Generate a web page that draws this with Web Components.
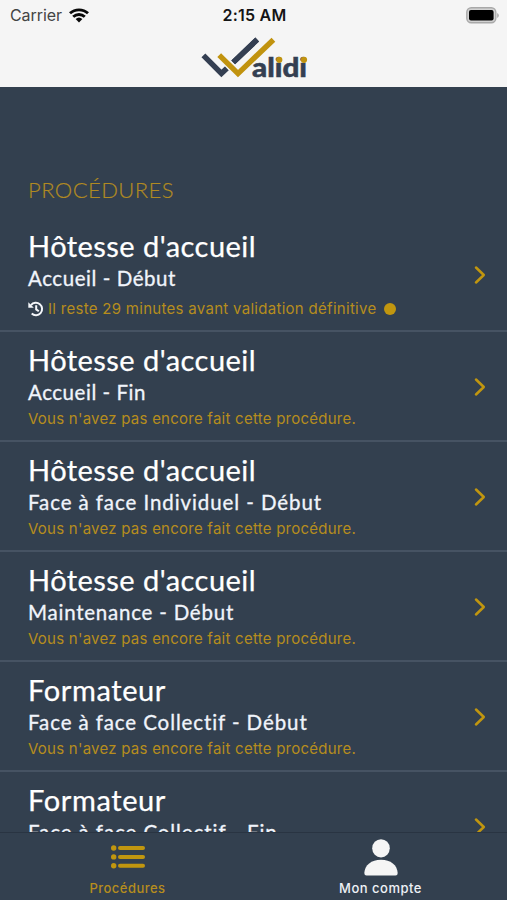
<!DOCTYPE html>
<html lang="fr">
<head>
<meta charset="utf-8">
<title>Validi</title>
<style>
html,body{margin:0;height:100%;overflow:hidden}
body{background:#33404f}
</style>
</head>
<body>
<validi-app></validi-app>
<script>
const define = (name, html, setup) => customElements.define(name, class extends HTMLElement {
  connectedCallback() {
    if (this.shadowRoot) return;
    const t = document.createElement('template');
    t.innerHTML = html;
    this.attachShadow({mode: 'open'}).append(t.content.cloneNode(true));
    if (setup) setup(this, this.shadowRoot);
  }
});

/* Text whose tracking is spread so that the line takes the given width. */
define('tracked-text', `<style>:host{display:block;white-space:nowrap}span{display:inline-block}</style><span></span>`, (el, root) => {
  const span = root.querySelector('span');
  span.textContent = el.getAttribute('text');
  const gap = (Number(el.getAttribute('width')) - span.getBoundingClientRect().width) / span.textContent.length;
  span.style.letterSpacing = gap.toFixed(3) + 'px';
});

define('status-bar', `<style>
:host{display:grid;grid-template-columns:1fr auto 1fr;align-items:center;height:30px;padding:0 8px 0 10px;font:16px/30px Inter,"Liberation Sans",sans-serif;color:#444}
.left{display:flex;align-items:center;gap:7px}
.time{color:#151515;font-weight:600}
.right{justify-self:end;display:flex}
svg{display:block}
</style>
<div class="left"><tracked-text text="Carrier" width="52"></tracked-text>
<svg width="20" height="15" viewBox="0 0 20 15" fill="none" stroke="#080808" stroke-width="2.9"><path d="M1 5.3C6 .7 14 .7 19 5.3M4.2 8.8C7.6 5.7 12.4 5.7 15.8 8.8"/><path d="M6.6 10.9Q10 7.9 13.4 10.9L10 14.6Z" fill="#080808" stroke="none"/></svg></div>
<tracked-text class="time" text="2:15 AM" width="64"></tracked-text>
<div class="right"><svg width="33" height="17" viewBox="0 0 33 17"><rect x=".8" y=".8" width="29" height="15" rx="4.5" fill="#d2d2d2" stroke="#a9a9a9" stroke-width="1.4"/><rect x="3" y="3" width="24.6" height="10.6" rx="2" fill="#000"/><path d="M31.2 6v5q1.6-.6 1.6-2.5T31.2 6" fill="#aaa"/></svg></div>`);

define('validi-logo', `<style>:host{display:block;width:110px;height:46px}svg{display:block;overflow:visible}</style>
<svg width="110" height="46" viewBox="0 0 110 46">
<g fill="none" stroke-width="5.4">
<path d="M3.4 20.3L21.4 38.5L28 32.2M33.2 27.4L57.2 4.5" stroke="#343f52"/>
<path d="M19.2 20.1L38 39.5L73.4 4.9" stroke="#f5f5f5" stroke-width="7.5"/>
<path d="M33.2 27.4L57.2 4.5" stroke="#343f52"/>
<path d="M19.2 20.1L38 38.6L73.4 4.7" stroke="#c1930f"/>
</g>
<text x="52" y="42.300" textLength="55" lengthAdjust="spacingAndGlyphs" font-family="Lato,sans-serif" font-weight="900" font-size="26.5" fill="#343f52" stroke="#343f52" stroke-width=".5">alidi</text>
<g fill="#c1930f"><circle cx="79.300" cy="24.800" r="3.1"/><circle cx="104" cy="24.800" r="3.1"/></g>
</svg>`);

define('app-header', `<style>
:host{display:flex;flex-direction:column;height:87px;background:#f5f5f5;flex:none}
validi-logo{margin:5px 0 0 200px}
</style><status-bar></status-bar><validi-logo></validi-logo>`);

define('procedure-row', `<style>
:host{display:flex;align-items:center;justify-content:space-between;box-sizing:border-box;height:110px;flex:none;padding:0 20px 0 28px;border-bottom:2px solid #465363}
:host([pending]){height:114px}
.body{display:flex;flex-direction:column;align-self:flex-start;padding-top:10px}
.title{font:29px/36px Lato,sans-serif;color:#fff;-webkit-text-stroke:.25px #fff}
.sub{font:20.5px/28px Lato,sans-serif;color:#f0f4fb;-webkit-text-stroke:.3px #f0f4fb}
.status{display:flex;align-items:center;height:26px;font:15px/24px Inter,sans-serif;color:#b68d1d}
:host([pending]) .status{height:33px}
.history,.dot{display:none;flex:none}
:host([pending]) .history{display:block;margin-right:4px}
:host([pending]) .dot{display:block;width:12px;height:12px;border-radius:50%;background:#c1960f;margin-left:7.5px}
.chev{flex:none;margin-top:1px}
</style>
<div class="body"><tracked-text class="title"></tracked-text><tracked-text class="sub"></tracked-text>
<div class="status"><svg class="history" width="16" height="16" viewBox="0 0 16 16" fill="none" stroke="#f4f6fa" stroke-width="2"><path d="M3 4.2A6.2 6.2 0 1 1 3.7 12.6M8.2 4.2v4.2l2.6 1.9"/><path d="M.3 1.2v5.5h5.5Z" fill="#f4f6fa" stroke="none"/></svg><tracked-text class="note"></tracked-text><span class="dot"></span></div></div>
<svg class="chev" width="14" height="20" viewBox="0 0 14 20" fill="none" stroke="#c1960f" stroke-width="2.5" stroke-linecap="round" stroke-linejoin="round"><path d="M3 2.5L10.8 10L3 17.5"/></svg>`, (el, root) => {
  for (const part of ['title', 'sub', 'note']) {
    const [text, width] = el.getAttribute('data-' + part).split('|');
    const t = root.querySelector('.' + part);
    const copy = document.createElement('tracked-text');
    copy.className = t.className;
    copy.setAttribute('text', text);
    copy.setAttribute('width', width);
    t.replaceWith(copy);
  }
});

define('tab-item', `<style>
:host{display:flex;flex-direction:column;align-items:center;flex:1;font:500 13px/15px Inter,sans-serif}
.icon{height:48px;display:flex;align-items:center}
::slotted(svg){display:block}
</style><div class="icon"><slot></slot></div><tracked-text></tracked-text>`, (el, root) => {
  const t = document.createElement('tracked-text');
  t.setAttribute('text', el.getAttribute('label'));
  t.setAttribute('width', el.getAttribute('size'));
  root.querySelector('tracked-text').replaceWith(t);
});

define('tab-bar', `<style>
:host{display:flex;box-sizing:border-box;height:68px;flex:none;background:#33404f;border-top:1px solid #293442}
.on{color:#b68d1d;padding-left:1px}.off{color:#eef1f6}
</style>
<tab-item class="on" label="Procédures" size="76"><svg width="34" height="24" viewBox="0 0 34 24" fill="#c1960f"><circle cx="2.7" cy="3" r="2.7"/><circle cx="2.7" cy="11.9" r="2.7"/><circle cx="2.7" cy="20.7" r="2.7"/><rect x="7" y="1" width="27" height="4" rx="2"/><rect x="7" y="9.9" width="27" height="4" rx="2"/><rect x="7" y="18.7" width="27" height="4" rx="2"/></svg></tab-item>
<tab-item class="off" label="Mon compte" size="83"><svg width="34" height="37" viewBox="0 0 34 37" fill="#f5f5f5"><ellipse cx="17" cy="9.3" rx="8.8" ry="9.1"/><path d="M2.5 36.5Q.3 36.5.3 34C.8 26 7.3 20.7 17 20.7S33.200 26 33.700 34Q33.700 36.500 31.500 36.500Z"/></svg></tab-item>`);

const N = "Vous n'avez pas encore fait cette procédure.|328";
const H = "Hôtesse d'accueil|228";
const rows = [
  [H, 'Accueil - Début|148', 'Il reste 29 minutes avant validation définitive|328.5', true],
  [H, 'Accueil - Fin|118', N],
  [H, 'Face à face Individuel - Début|294', N],
  [H, 'Maintenance - Début|206', N],
  ['Formateur|138', 'Face à face Collectif - Début|280', N],
  ['Formateur|138', 'Face à face Collectif - Fin|250', N]
];
define('validi-app', `<style>
:host{display:flex;flex-direction:column;width:507px;height:900px;background:#33404f;overflow:hidden}
main{flex:1;min-height:0;overflow:hidden;display:flex;flex-direction:column}
.heading{font:300 22px/28px Lato,sans-serif;color:#b08a22;-webkit-text-stroke:.2px #b08a22;margin:89px 0 14px 28px;flex:none}
</style><app-header></app-header><main><tracked-text class="heading" text="PROCÉDURES" width="146"></tracked-text>
${rows.map(([a, b, c, p]) => `<procedure-row ${p ? 'pending' : ''} data-title="${a}" data-sub="${b}" data-note="${c}"></procedure-row>`).join('')}
</main><tab-bar></tab-bar>`);
</script>
</body>
</html>
